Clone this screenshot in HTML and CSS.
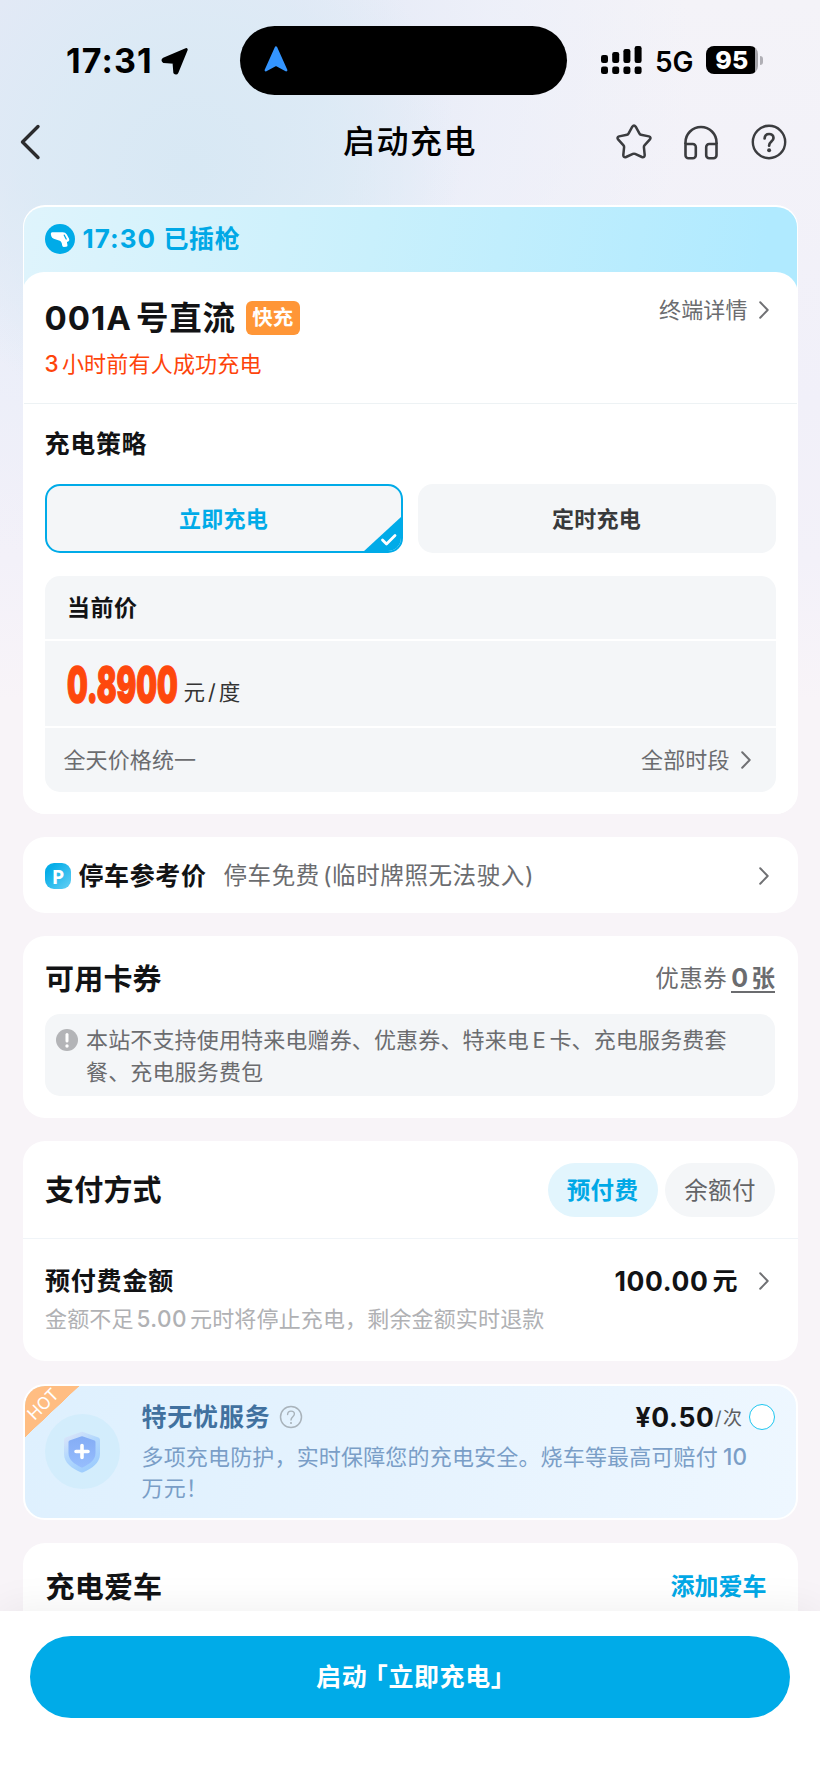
FILE: index.html
```html
<!DOCTYPE html>
<html lang="zh-CN">
<head>
<meta charset="utf-8">
<title>启动充电</title>
<link rel="stylesheet" href="styles.css">
</head>
<body>
<div class="screen">
  <header class="top">
    <div class="status">
      <div class="clock">
        <span class="time">17:31</span>
        <svg class="loc" viewBox="0 0 28 28" width="28" height="28"><path d="M25.2 2.6 16 25.2q-.9 1.6-2.2.2L13 15.2 2.8 14.4q-1.6-1 0-2.2z" fill="#000" stroke="#000" stroke-width="3" stroke-linejoin="round"/></svg>
      </div>
      <div class="island"><svg viewBox="0 0 24 26" width="24" height="26"><path d="M12 1.5 22.2 24.2 12 18.6 1.8 24.2z" fill="#3495ff" stroke="#3495ff" stroke-width="2.4" stroke-linejoin="round"/></svg></div>
      <div class="signals">
        <svg viewBox="0 0 41 28" width="41" height="28"><g fill="#000"><rect x="0" y="9" width="7" height="8" rx="2.2"/><rect x="11.200" y="6" width="7" height="11" rx="2.200"/><rect x="22.400" y="3" width="7" height="14" rx="2.200"/><rect x="33.600" y="0" width="7" height="17" rx="2.200"/><rect x="0" y="20.500" width="7" height="7.500" rx="2.200"/><rect x="11.200" y="20.500" width="7" height="7.500" rx="2.200"/><rect x="22.400" y="20.500" width="7" height="7.500" rx="2.200"/><rect x="33.600" y="20.500" width="7" height="7.500" rx="2.200"/></g></svg>
        <span class="net">5G</span>
        <span class="battery"><span class="level">95</span></span><span class="nub"></span>
      </div>
    </div>
    <nav class="nav">
      <svg class="back" viewBox="0 0 22 36" width="22" height="36"><path d="M19 2.500 3.500 18 19 33.500" fill="none" stroke="#2b2b2d" stroke-width="3.400" stroke-linecap="round" stroke-linejoin="round"/></svg>
      <h1 class="page-title">启动充电</h1>
      <div class="actions">
        <svg viewBox="0 0 38 38" width="38" height="38"><path d="M17.300 3.700q1.700-2.600 3.400 0l3.800 6.900q.5.900 1.500 1.100l7.900 1.700q2.600.9 1 3l-5.400 6q-.7.800-.6 1.800l.8 8q-.2 2.600-2.800 1.800l-6.800-3.100q-1.100-.4-2.200 0l-6.800 3.100q-2.600.8-2.800-1.800l.8-8q.1-1-.6-1.800l-5.400-6q-1.600-2.100 1-3L12 11.700q1-.2 1.500-1.100z" fill="none" stroke="#3b3c3f" stroke-width="2.500" stroke-linejoin="round"/></svg>
        <svg viewBox="0 0 38 38" width="38" height="38"><g fill="none" stroke="#3b3c3f" stroke-width="2.600"><path d="M2.500 21v-1.500a15.500 15.500 0 0 1 31 0v1.500"/><path d="M2.500 21h7.300a3 3 0 0 1 3 3v8.200a3 3 0 0 1-3 3H5.500a3 3 0 0 1-3-3zM33.500 21h-7.300a3 3 0 0 0-3 3v8.200a3 3 0 0 0 3 3h4.300a3 3 0 0 0 3-3z"/></g></svg>
        <svg viewBox="0 0 38 38" width="38" height="38"><circle cx="19" cy="19" r="16.200" fill="none" stroke="#3b3c3f" stroke-width="2.400"/><path d="M14.600 15.500c.2-3 2-4.500 4.500-4.500s4.400 1.600 4.400 4c0 3.600-4.400 3.600-4.400 7.700" fill="none" stroke="#3b3c3f" stroke-width="2.700" stroke-linecap="round"/><circle cx="19.100" cy="27.300" r="2" fill="#3b3c3f"/></svg>
      </div>
    </nav>
  </header>

  <main class="cards">
    <section class="card charger">
      <div class="plugged">
        <svg viewBox="0 0 30 30" width="30" height="30"><circle cx="15" cy="15" r="15" fill="#00abe8"/><path d="M7.300 8.200h10.500q2.600 0 4 2.300l2.300 4.300q.8 1.700-.8 2.600l-1.400.7.6 3.200q.2 1.400-1.200 1.500l-2.600.1q-1.300-.1-1.500-1.400-.3-4.600-4-5.200l-4.400-1.500q-2-.8-2.500-2.600l-.5-2.200q-.2-1.800 1.500-1.800z" fill="#fff"/><path d="m19.300 11.200 1.900 3.800" stroke="#00abe8" stroke-width="1.300" stroke-linecap="round"/></svg>
        <span class="plug-time">17:30</span><span class="plug-text">已插枪</span>
      </div>
      <div class="panel">
        <div class="terminal">
          <div class="terminal-head">
            <h2 class="terminal-name">001A<span class="cjk">号直流</span></h2>
            <span class="tag">快充</span>
            <a class="more detail">终端详情<svg class="chev" viewBox="0 0 10 18" width="10" height="18"><path d="m1.200 1.200 7.500 7.800-7.500 7.800"/></svg></a>
          </div>
          <p class="recent"><span class="hours">3</span><span class="gap">小时前有人成功充电</span></p>
        </div>
        <div class="strategy">
          <h3 class="sub-title">充电策略</h3>
          <div class="options">
            <button class="option selected">立即充电<svg class="corner" viewBox="0 0 39 36" width="39" height="36"><path d="M39 0v36H0z" fill="#00abe8"/><path d="m19.500 24 4 4 8.500-8.500" fill="none" stroke="#fff" stroke-width="2.800" stroke-linecap="round" stroke-linejoin="round"/></svg></button>
            <button class="option">定时充电</button>
          </div>
          <div class="price-box">
            <div class="price-head">当前价</div>
            <div class="price-row"><span class="price"><span class="price-num">0.8900</span></span><span class="unit">元<i class="slash">/</i>度</span></div>
            <div class="price-foot"><span>全天价格统一</span><a class="more">全部时段<svg class="chev" viewBox="0 0 10 18" width="10" height="18"><path d="m1.200 1.200 7.500 7.800-7.500 7.800"/></svg></a></div>
          </div>
        </div>
      </div>
    </section>

    <section class="card parking">
      <span class="p-icon">P</span>
      <h3 class="park-title">停车参考价</h3>
      <span class="park-text">停车免费<span class="paren">(临时牌照无法驶入)</span></span>
      <svg class="chev" viewBox="0 0 10 18" width="10" height="18"><path d="m1.200 1.200 7.500 7.800-7.500 7.800"/></svg>
    </section>

    <section class="card coupons">
      <div class="row coupon-head"><h2 class="title">可用卡券</h2><span class="coupon-count">优惠券<b class="count"><span class="zero">0</span>张</b></span></div>
      <div class="notice">
        <svg viewBox="0 0 22 22" width="22" height="22"><circle cx="11" cy="11" r="11" fill="#b3b4b7"/><path d="M11 5.500v6.500" stroke="#fff" stroke-width="3" stroke-linecap="round"/><circle cx="11" cy="17" r="1.700" fill="#fff"/></svg>
        <p class="notice-text">本站不支持使用特来电赠券、优惠券、特来电<span class="latin">E</span>卡、充电服务费套<br>餐、充电服务费包</p>
      </div>
    </section>

    <section class="card payment">
      <div class="pay-head"><h2 class="title">支付方式</h2><div class="pills"><button class="pill on">预付费</button><button class="pill">余额付</button></div></div>
      <div class="pay-body">
        <div class="row amount-row"><h3 class="amount-title">预付费金额</h3><a class="amount">100.00<span class="yuan">元</span><svg class="chev" viewBox="0 0 10 18" width="10" height="18"><path d="m1.200 1.200 7.500 7.800-7.500 7.800"/></svg></a></div>
        <p class="hint">金额不足<span class="latin sum">5.00</span>元时将停止充电，剩余金额实时退款</p>
      </div>
    </section>

    <section class="card service">
      <div class="ribbon"><span class="ribbon-text">HOT</span></div>
      <div class="shield">
        <svg viewBox="0 0 38 42" width="38" height="42">
          <defs>
            <linearGradient id="rim" x1="0" y1="0" x2=".6" y2="1"><stop offset="0" stop-color="#e2e7f8"/><stop offset=".5" stop-color="#b3d8fd"/><stop offset="1" stop-color="#9dccfd"/></linearGradient>
            <linearGradient id="core" x1="0" y1="0" x2="0" y2="1"><stop offset="0" stop-color="#84acf5"/><stop offset="1" stop-color="#96bdfd"/></linearGradient>
          </defs>
          <path d="M18 1q1-.5 2 0l15.500 5.500Q37 7.200 37 9v14c0 9-8 14.500-16.700 18.300q-1.300.5-2.600 0C9 37.500 1 32 1 23V9q0-1.800 1.500-2.500z" fill="url(#rim)"/>
          <path d="M18 5.500q1-.4 2 0l11.500 4q1 .5 1 1.600V22c0 7-6 11-12.500 14.200q-1 .4-2 0C11.500 33 5.500 29 5.500 22V11.100q0-1.100 1-1.600z" fill="url(#core)"/>
          <path d="M19 14.500v12M13 20.500h12" stroke="#fff" stroke-width="3.600" stroke-linecap="round"/>
        </svg>
      </div>
      <div class="service-main">
        <div class="service-head">
          <h3 class="service-title">特无忧服务</h3>
          <svg viewBox="0 0 24 24" width="24" height="24"><circle cx="12" cy="12" r="10.500" fill="none" stroke="#a9b3bb" stroke-width="1.500"/><path d="M8.600 9.500c.1-2.200 1.500-3.400 3.400-3.400s3.400 1.200 3.400 3c0 2.700-3.400 2.800-3.400 6" fill="none" stroke="#a9b3bb" stroke-width="1.400" stroke-linecap="round"/><circle cx="12" cy="18" r="1.100" fill="#a9b3bb"/></svg>
          <span class="fee">¥0.50</span><span class="per">/<span class="ci">次</span></span><span class="radio"></span>
        </div>
        <p class="service-desc">多项充电防护，实时保障您的充电安全。烧车等最高可赔付<span class="ten">10</span><br>万元！</p>
      </div>
    </section>

    <section class="card car"><h2 class="title">充电爱车</h2><a class="add">添加爱车</a></section>
  </main>

  <footer class="footer"><button class="start">启动<span class="quote">「立即充电」</span></button></footer>
</div>
</body>
</html>
```
FILE: styles.css
```css
* { box-sizing: border-box; margin: 0; padding: 0; }
html, body { height: 1781px; overflow: hidden; }
body { font-family: Inter, "Noto Sans CJK SC", sans-serif; color: #121315; background: #f8f4f8; text-autospace: no-autospace; text-spacing-trim: space-all; }
button { font: inherit; border: 0; color: inherit; background: none; letter-spacing: inherit; }
svg { display: block; flex: none; }
p, h1, h2, h3, span, a { white-space: nowrap; }

.screen {
  width: 820px; height: 1781px; display: flex; flex-direction: column; overflow: hidden;
  background:
    radial-gradient(circle 270px at 190px 170px, rgba(215,232,244,.95) 0, rgba(218,234,245,.75) 55%, rgba(224,234,246,0) 100%),
    radial-gradient(ellipse 560px 500px at 130px 60px, rgba(227,233,246,1) 30%, rgba(234,238,249,.7) 65%, rgba(243,242,250,0) 100%),
    linear-gradient(180deg, #f4f3f8 0, #f1f0f9 400px, #f3f1f9 560px, #f8f4f8 700px);
}

.top { height: 205px; flex: none; }
.status { height: 98px; padding-top: 26px; display: flex; align-items: flex-start; }
.clock { width: 240px; height: 69px; padding: 1px 0 0 66px; display: flex; align-items: center; }
.time { width: 87px; font-size: 34px; font-weight: 700; line-height: 42px; letter-spacing: 1.100px; color: #000; }
.loc { margin-left: 8px; }
.island { width: 327px; height: 69px; border-radius: 35px; background: #000; display: flex; align-items: center; padding: 0 0 4px 24px; }
.signals { height: 69px; display: flex; align-items: center; padding: 0 0 1px 34px; }
.net { margin-left: 13px; font-size: 28px; font-weight: 600; line-height: 40px; color: #000; padding-top: 3px; width: 51px; }
.battery { width: 52px; height: 28px; border-radius: 8px; background: linear-gradient(90deg, #000 49px, #a5a4aa 49px); display: flex; align-items: center; justify-content: center; }
.level { color: #fff; font-size: 25px; line-height: 28px; font-weight: 800; letter-spacing: .4px; }
.nub { width: 3px; height: 9px; margin-left: 2px; border-radius: 0 4px 4px 0; background: #b0afb5; }

.nav { height: 88px; display: flex; align-items: center; padding: 0 32px 0 19px; }
.page-title { width: 140px; margin-left: 302px; font-size: 32px; line-height: 40px; font-weight: 500; letter-spacing: 1.500px; color: #000; }
.actions { display: flex; gap: 29.500px; margin-left: auto; }

.cards { flex: 1; min-height: 0; overflow: hidden; display: flex; flex-direction: column; gap: 23px; padding: 0 22.500px; }
.card { flex: none; background: #fff; border-radius: 22px; overflow: hidden; }
.row { display: flex; align-items: center; justify-content: space-between; }
.chev { fill: none; stroke: #707174; stroke-width: 2; stroke-linecap: round; stroke-linejoin: round; }
.gap { margin-left: .14em; }
.title { padding-top: 2px; font-size: 29px; line-height: 36px; font-weight: 700; letter-spacing: .2px; }

.charger { height: 609px; border: solid #fff; border-width: 2px 1.500px 0; background: linear-gradient(100deg, #dff4fc 0, #c9f0fc 45%, #b0eaff 95%) 0 0 / 100% 86px no-repeat, #fff; }
.plugged { height: 65px; padding: 0 0 2px 21px; display: flex; align-items: center; color: #00a8e6; font-size: 25px; line-height: 30px; font-weight: 700; }
.plug-time { width: 73px; margin-left: 8px; font-size: 26px; letter-spacing: 1px; }
.plug-text { margin-left: 8px; letter-spacing: .6px; }
.panel { height: 542px; margin: 0 -1.500px; background: #fff; border-radius: 22px 22px 0 0; }
.terminal { height: 132px; padding: 29px 22.500px 0; border-bottom: 1px solid #edf2f4; }
.terminal-head { height: 34px; display: flex; align-items: center; }
.terminal-name { font-size: 33px; line-height: 34px; font-weight: 700; letter-spacing: 1px; }
.cjk { margin-left: 4px; font-size: 32.500px; letter-spacing: .8px; }
.tag { width: 54px; height: 34px; margin-left: 10px; border-radius: 6px; background: #ff9637; color: #fff; font-size: 20.500px; line-height: 33px; font-weight: 600; font-style: oblique 8deg; text-align: center; }
.more { display: flex; align-items: center; gap: 11px; color: #6b6c6f; font-size: 22px; line-height: 30px; letter-spacing: .1px; }
.detail { margin: -17px 7px 0 auto; }
.recent { margin-top: 14px; font-size: 22px; line-height: 30px; letter-spacing: .2px; color: #fe440b; }
.hours { font-weight: 500; font-size: 22.500px; }
.strategy { padding: 24px 22.500px 0; }
.sub-title { font-size: 25px; line-height: 32px; font-weight: 700; letter-spacing: .7px; }
.options { margin-top: 24px; display: grid; grid-template-columns: 1fr 1fr; gap: 15px; }
.option { position: relative; height: 69px; padding-bottom: 4px; border-radius: 15px; background: #f4f6f8; color: #38393b; font-size: 22px; font-weight: 600; letter-spacing: .2px; overflow: hidden; }
.selected { color: #00abe8; border: 2px solid #00abe8; }
.corner { position: absolute; right: -1px; bottom: -1px; }
.price-box { height: 216px; margin-top: 23px; border-radius: 15px; background: #f4f6f8; overflow: hidden; }
.price-head { height: 63px; padding-left: 22.500px; font-size: 23px; line-height: 64px; font-weight: 600; letter-spacing: .5px; }
.price-row { height: 89px; padding: 0 22px; border: solid #fff; border-width: 2px 0; display: flex; align-items: center; }
.price { width: 110px; height: 50px; color: #fe480d; }
.price-num { display: inline-block; font-size: 48px; line-height: 52px; font-weight: 900; letter-spacing: 0; transform: scaleX(.608); transform-origin: 0 50%; -webkit-text-stroke: 1.400px #fe480d; }
.unit { margin: 16px 0 0 7px; font-size: 21.500px; line-height: 28px; color: #333; }
.slash { margin: 0 3px; font-style: normal; }
.price-foot { height: 64px; padding: 0 25px 0 19px; display: flex; align-items: center; justify-content: space-between; font-size: 22px; line-height: 30px; color: #6b6c6f; letter-spacing: .1px; }

.parking { height: 76px; padding: 2px 28.500px 0 22.500px; display: flex; align-items: center; }
.p-icon { width: 26px; height: 26px; border-radius: 9px; background: linear-gradient(135deg, #05ade8 20%, #66d0f5); color: #fff; font: 700 20px/27px "Open Sans", sans-serif; text-align: center; }
.park-title { margin-left: 7.500px; font-size: 25px; font-weight: 700; letter-spacing: .6px; line-height: 32px; }
.park-text { flex: 1; margin-left: 17px; font-size: 23.500px; line-height: 32px; letter-spacing: .6px; color: #6b6c6f; }
.paren { margin-left: 3px; }

.coupons { height: 182px; padding: 24px 22.500px 0; }
.coupon-head { height: 38px; }
.coupon-count { font-size: 23.500px; line-height: 32px; letter-spacing: .5px; color: #6b6c6f; }
.count { margin-left: 4px; letter-spacing: 0; display: inline-block; line-height: 24px; border-bottom: 2px solid #6b6c6f; }
.zero { font-size: 25px; margin-right: 3.500px; }
.notice { height: 82px; margin-top: 16px; padding: 11px 11px 0; border-radius: 15px; background: #f4f6f8; display: flex; }
.notice svg { margin-top: 4px; }
.notice-text { margin-left: 8px; font-size: 22px; line-height: 31.700px; letter-spacing: .15px; color: #6b6c6f; }
.latin { margin: 0 .16em; }
.sum { margin: 0 .13em; font-size: 22.500px; letter-spacing: .5px; font-weight: 500; }

.payment { height: 219.500px; }
.pay-head { height: 98px; padding: 0 22.500px; border-bottom: 1px solid #f0f4f8; display: flex; align-items: center; justify-content: space-between; }
.pills { display: flex; gap: 7.500px; }
.pill { width: 110px; height: 54px; padding-bottom: 2px; border-radius: 27px; background: #f4f6f8; color: #636467; font-size: 23.500px; letter-spacing: .4px; }
.on { background: #e2f5fd; color: #00a8e6; font-weight: 700; }
.pay-body { padding: 25px 22.500px 0; }
.amount-row { height: 34px; padding-right: 6px; }
.amount-title { font-size: 25px; line-height: 34px; font-weight: 700; letter-spacing: .8px; }
.amount { display: flex; align-items: center; font-size: 26.500px; line-height: 34px; font-weight: 700; letter-spacing: .6px; }
.yuan { margin: 0 21px 0 4px; font-size: 25px; }
.hint { margin-top: 6px; font-size: 22px; line-height: 30px; letter-spacing: .15px; color: #b0b1b4; }

.service { position: relative; height: 136.500px; border: 2px solid #fff; background: linear-gradient(100deg, #def0fe, #e6f3fe 50%, #eef7ff); display: flex; }
.ribbon { position: absolute; left: 0; top: 0; width: 54px; height: 51px; padding: 0 16px 14px 0; background: linear-gradient(to bottom right, #ffbd82 50%, transparent 50.500%); display: flex; align-items: center; justify-content: center; }
.ribbon-text { transform: rotate(-45deg); color: #fff; font-size: 17px; line-height: 16px; }
.shield { width: 75px; height: 75px; margin: 28.500px 0 0 20px; border-radius: 50%; background: #d3edfc; display: flex; align-items: center; justify-content: center; flex: none; }
.service-main { flex: 1; padding: 14px 20.500px 0 22px; }
.service-head { height: 34px; display: flex; align-items: center; }
.service-head svg { margin-left: 8.500px; }
.service-title { color: #41719f; font-size: 25px; line-height: 34px; font-weight: 700; letter-spacing: .8px; }
.fee { margin-left: auto; font-size: 26.500px; font-weight: 700; line-height: 34px; letter-spacing: .7px; }
.per { font-size: 19px; line-height: 26px; color: #5d5e61; padding-top: 5px; }
.ci { margin-left: 1.500px; }
.radio { width: 26px; height: 26px; margin-left: 7px; border: 1.500px solid #1cc5ef; border-radius: 50%; background: #fff; }
.service-desc { margin-top: 7px; font-size: 22px; line-height: 31.700px; letter-spacing: .17px; color: #7a9ec7; }
.ten { margin-left: 5px; font-size: 22.500px; font-weight: 500; }

.car { height: 110px; padding: 0 31px 22px 23px; display: flex; align-items: center; justify-content: space-between; }
.add { font-size: 24px; line-height: 32px; font-weight: 600; color: #00a8e6; }

.footer { position: relative; height: 170px; flex: none; padding: 24.500px 30px 0; background: #fff; box-shadow: 0 0 40px rgba(0,0,0,.07); }
.start { width: 760px; height: 82px; border-radius: 41px; background: #00abe8; color: #fff; font-size: 25px; line-height: 34px; font-weight: 600; letter-spacing: .6px; display: flex; align-items: center; justify-content: center; }
.quote { margin-left: 8px; font-feature-settings: "halt"; }
```
